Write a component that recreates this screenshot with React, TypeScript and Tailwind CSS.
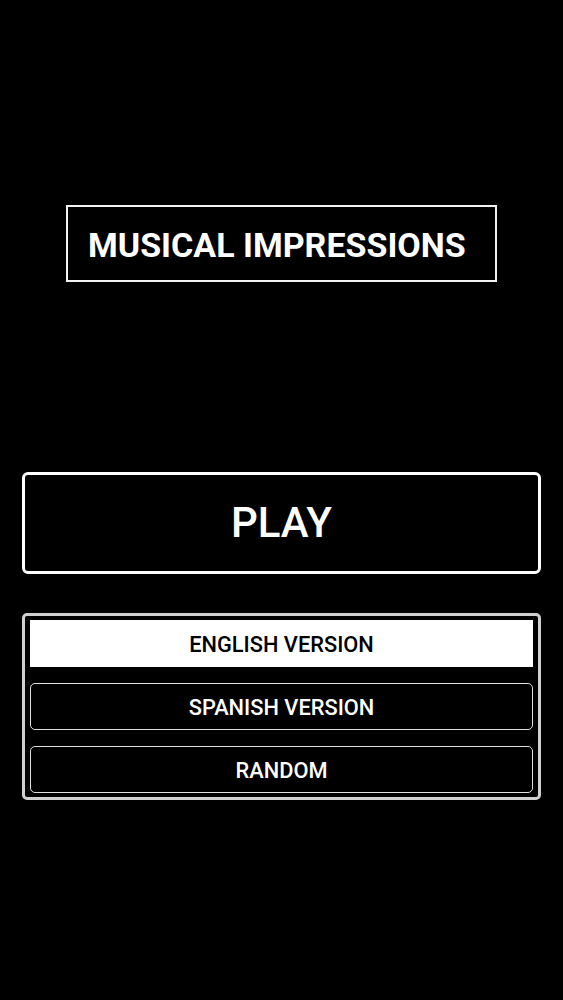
export default function App() {
  return (
    <div
      className="min-h-[1000px] w-full bg-black flex flex-col items-center text-white"
      style={{ fontFamily: "Roboto, 'Noto Sans', sans-serif" }}
    >
      <div className="mt-[205px] w-[431px] h-[77px] border-2 border-[#f2f2f2] flex items-center pl-[20px] pt-[2px]">
        <span className="text-[34px] font-bold leading-none">MUSICAL IMPRESSIONS</span>
      </div>

      <button className="mt-[190px] w-[519px] h-[102px] border-[3px] border-white rounded-[6px] flex items-center justify-center">
        <span className="text-[42px] font-medium leading-none">PLAY</span>
      </button>

      <div className="mt-[39px] w-[519px] border-[3px] border-[#d0d0d0] rounded-[5px] px-[5px] py-[4px] flex flex-col gap-[16px]">
        <button className="h-[47px] pt-[3px] bg-white text-black text-[21.8px] font-medium flex items-center justify-center">
          ENGLISH VERSION
        </button>
        <button className="h-[47px] pt-[3px] border-[1.5px] border-[#e0e0e0] rounded-[5px] text-[21.8px] font-medium flex items-center justify-center">
          SPANISH VERSION
        </button>
        <button className="h-[47px] pt-[3px] border-[1.5px] border-[#e0e0e0] rounded-[5px] text-[21.8px] font-medium flex items-center justify-center">
          RANDOM
        </button>
      </div>
    </div>
  );
}
